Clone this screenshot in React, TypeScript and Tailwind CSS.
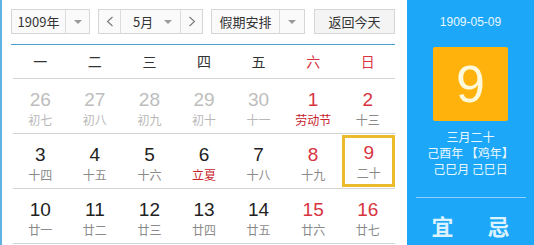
import React from 'react';

type Day = { n: number; lunar: string; tone: 'muted' | 'normal' | 'red'; lunarRed?: boolean; selected?: boolean };

const weeks: Day[][] = [
  [
    { n: 26, lunar: '初七', tone: 'muted' },
    { n: 27, lunar: '初八', tone: 'muted' },
    { n: 28, lunar: '初九', tone: 'muted' },
    { n: 29, lunar: '初十', tone: 'muted' },
    { n: 30, lunar: '十一', tone: 'muted' },
    { n: 1, lunar: '劳动节', tone: 'red', lunarRed: true },
    { n: 2, lunar: '十三', tone: 'red' },
  ],
  [
    { n: 3, lunar: '十四', tone: 'normal' },
    { n: 4, lunar: '十五', tone: 'normal' },
    { n: 5, lunar: '十六', tone: 'normal' },
    { n: 6, lunar: '立夏', tone: 'normal', lunarRed: true },
    { n: 7, lunar: '十八', tone: 'normal' },
    { n: 8, lunar: '十九', tone: 'red' },
    { n: 9, lunar: '二十', tone: 'red', selected: true },
  ],
  [
    { n: 10, lunar: '廿一', tone: 'normal' },
    { n: 11, lunar: '廿二', tone: 'normal' },
    { n: 12, lunar: '廿三', tone: 'normal' },
    { n: 13, lunar: '廿四', tone: 'normal' },
    { n: 14, lunar: '廿五', tone: 'normal' },
    { n: 15, lunar: '廿六', tone: 'red' },
    { n: 16, lunar: '廿七', tone: 'red' },
  ],
];

const Caret = () => <span className="block w-0 h-0 border-l-[4px] border-r-[4px] border-t-[4px] border-l-transparent border-r-transparent border-t-[#9a9a9a]" />;

const DayCell = ({ d }: { d: Day }) => {
  const numColor = d.tone === 'muted' ? 'text-[#bdbdbd]' : d.tone === 'red' ? 'text-[#d8343f]' : 'text-[#222]';
  const lunarColor = d.lunarRed ? 'text-[#c8232c]' : d.tone === 'muted' ? 'text-[#b8b8b8]' : 'text-[#8a8a8a]';
  return (
    <div className="h-[55px] border-b border-[#d4d4d4] flex">
      <div className={`flex-1 flex flex-col items-center ${d.selected ? 'ml-[2px] mt-[1px] mb-[1px] border-[3px] border-[#ebbb2c] pt-[5px]' : 'pt-[11px]'}`}>
        <span className={`text-[19px] leading-[20px] ${numColor}`} style={{ fontFamily: '"Liberation Sans", Arial, sans-serif' }}>{d.n}</span>
        <span className={`mt-[3px] text-[12px] leading-[14px] ${lunarColor}`}>{d.lunar}</span>
      </div>
    </div>
  );
};

export default function App() {
  return (
    <div className="w-[534px] h-[245px] overflow-hidden flex bg-white border-l-2 border-[#5fb2e2]" style={{ fontFamily: '"Noto Sans CJK SC", "Liberation Sans", sans-serif' }}>
      <div className="w-[405px] pl-[9px] pr-[12px] pt-[9px] shrink-0">
        <div className="flex h-[25px] text-[13px] text-[#333]">
          <div className="w-[79px] flex border border-[#d6d6d6] bg-[#fafafa]">
            <span className="flex-1 flex items-center justify-center">1909年</span>
            <span className="w-[24px] border-l border-[#dcdcdc] flex items-center justify-center"><Caret /></span>
          </div>
          <div className="ml-[8px] w-[105px] flex border border-[#d6d6d6] bg-[#fafafa]">
            <span className="w-[22px] border-r border-[#dcdcdc] flex items-center justify-center text-[#777]">
              <svg width="8" height="11" viewBox="0 0 8 11"><path d="M6.5 1 L1.5 5.5 L6.5 10" fill="none" stroke="#777" strokeWidth="1.1" /></svg>
            </span>
            <span className="flex-1 flex items-center justify-between pl-[12px] pr-[8px]">5月<Caret /></span>
            <span className="w-[22px] border-l border-[#dcdcdc] flex items-center justify-center">
              <svg width="8" height="11" viewBox="0 0 8 11"><path d="M1.5 1 L6.5 5.5 L1.5 10" fill="none" stroke="#777" strokeWidth="1.1" /></svg>
            </span>
          </div>
          <div className="ml-[8px] w-[94px] flex border border-[#d6d6d6] bg-[#fafafa]">
            <span className="flex-1 flex items-center justify-center">假期安排</span>
            <span className="w-[25px] border-l border-[#dcdcdc] flex items-center justify-center"><Caret /></span>
          </div>
          <div className="ml-[9px] w-[81px] flex items-center justify-center border border-[#d6d6d6] bg-[#f4f4f4]">返回今天</div>
        </div>
        <div className="mt-[10px] h-[1px] bg-[#4b9fcf]" />
        <div className="pl-[2px]">
          <div className="grid grid-cols-7 h-[34px] border-b border-[#d4d4d4] text-[14px] text-[#333]">
            {['一', '二', '三', '四', '五'].map((w) => (
              <span key={w} className="flex items-center justify-center">{w}</span>
            ))}
            <span className="flex items-center justify-center text-[#d8343f]">六</span>
            <span className="flex items-center justify-center text-[#d8343f]">日</span>
          </div>
          {weeks.map((wk, i) => (
            <div key={i} className="grid grid-cols-7">
              {wk.map((d) => (
                <DayCell key={d.n} d={d} />
              ))}
            </div>
          ))}
        </div>
      </div>
      <div className="flex-1 bg-[#1ca7f8] flex flex-col items-center text-[#e9f7ff]">
        <div className="mt-[14px] text-[12px] leading-[16px]" style={{ fontFamily: '"Liberation Sans", Arial, sans-serif' }}>1909-05-09</div>
        <div className="mt-[17px] w-[75px] h-[74px] rounded-[2px] bg-[#ffb20b] flex items-center justify-center text-[52px] text-[#fff9dc]" style={{ fontFamily: '"Liberation Sans", Arial, sans-serif' }}>9</div>
        <div className="mt-[8px] text-[12px] leading-[16px]">三月二十</div>
        <div className="text-[12px] leading-[16px]">己酉年 【鸡年】</div>
        <div className="text-[12px] leading-[16px]">己巳月 己巳日</div>
        <div className="mt-[20px] w-[110px] h-[1px] bg-[#8ed1fb]" />
        <div className="mt-[14px] flex gap-[34px] text-[22px] leading-[26px] font-bold text-[#dcf2ff]">
          <span>宜</span>
          <span>忌</span>
        </div>
      </div>
    </div>
  );
}
